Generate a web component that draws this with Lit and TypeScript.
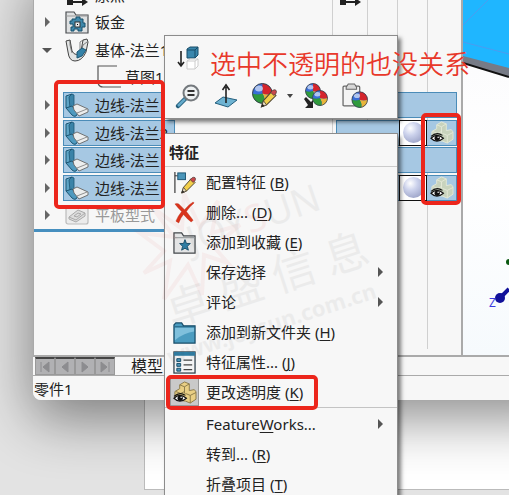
import { LitElement, html, svg, css, nothing, TemplateResult } from "lit";
import { customElement } from "lit/decorators.js";
import { classMap } from "lit/directives/class-map.js";

const icon = (size: number, body: unknown, view = "0 0 24 24") =>
  html`<svg class="icon" width=${size} height=${size} viewBox=${view} aria-hidden="true">${body}</svg>`;

const ball = (cx: number, cy: number, r: number) => svg`
  <g transform="translate(${cx} ${cy}) scale(${r / 10})">
    <circle r="10" fill="#2f56c8"/>
    <path d="M-10 0A10 10 0 0 1 0-10V0Q-5 2-10 0Z" fill="#3a6fd8"/>
    <path d="M0 0V-10A10 10 0 0 1 10 0Q5 2 0 0Z" fill="#d4242c"/>
    <path d="M0 0Q5 2 10 0A10 10 0 0 1 2 10Q3 5 0 0Z" fill="#e8b53a"/>
    <path d="M-10 0Q-5 2 0 0 3 5 2 10A10 10 0 0 1-10 0Z" fill="#2f9a3c"/>
    <ellipse cx="-3.5" cy="-5" rx="4" ry="3" fill="#fff" opacity=".6"/>
    <circle r="10" fill="none" stroke="#3a4148" stroke-width="1"/>
  </g>`;

const pencil = svg`
  <path d="M9 23l2-6 8-9 4 4-9 9z" fill="#f2cf4a" stroke="#4b4233"/>
  <path d="M18 9l2-2q2-1 3 0t0 3l-2 2z" fill="#c9474a" stroke="#55403c" stroke-width=".8"/>
  <path d="M9 23l2-6 3 4z" fill="#e9dcc0" stroke="#4b4233" stroke-width=".8"/>
  <path d="M9 23l1-3 2 2z" fill="#222"/>`;

const blocksEye = (fill: string, line: string) => svg`
  <path d="M7 4l5-3 5 2v7l5-1 2 2v8l-6 4-5-2-7-1-4-3v-6l5-3z" fill="${fill}" stroke="${line}"/>
  <path d="M7 4l5 2 5-3M12 6v7M3 11l5 2 4-2M13 13l5 2 6-3M18 15v8" fill="none" stroke="${line}"/>
  <path d="M1 18q6-6 13 0-7 6-13 0z" fill="#fff" stroke="#111" stroke-width="1.200"/>
  <path d="M1 16q6-5 12-1" fill="none" stroke="#111" stroke-width="1.200"/>
  <circle cx="7.500" cy="18" r="2.800" fill="#111"/><circle cx="8.500" cy="17" r=".8" fill="#fff"/>`;

const flange = svg`
  <path d="M1 3l6-2v13l-6 1z" fill="#5ea5c6" stroke="#1d5673"/>
  <path d="M4 4l3-3 2 1v11l-4 2z" fill="#3a83a8" stroke="#1d5673" stroke-width=".8"/>
  <path d="M1 15l6-2 6 7-2 3q-2 1-4-1z" fill="#4f9abf" stroke="#1d5673"/>
  <path d="M8 13l4-2 11 5v3l-9 4-5-6z" fill="#eceeee" stroke="#666" stroke-width=".9"/>
  <path d="M12 20l10-4" fill="none" stroke="#777" stroke-width=".8"/>`;

const baseFlange = svg`
  <path d="M1 3l4-1 2 11q4 7 9 0l2-11 4-1 1 3-2 10q-4 9-11 9-6 0-7-9z" fill="#e2e4e4" stroke="#444"/>
  <path d="M5 2v5l2 8M18 2l-3 2v8M22 4l-4 3-2 7" fill="none" stroke="#666" stroke-width=".8"/>
  <path d="M12 14l5-4 4 2-4 6-5 2z" fill="#3482a8" stroke="#1d5673"/>`;

const sheetFolder = svg`
  <path d="M1 4V2h8l2 3h12v18H1z" fill="#dfe1e2" stroke="#4a4d50" stroke-width="1.200"/>
  <path d="M1 6h22" stroke="#999"/>
  <path d="M7 9h4V7h4v2h3v4h2v4h-3v4h-4v-2H9v2H6v-4h2v-3H5v-3h2z" fill="#3f88ab" stroke="#17506d"/>
  <rect x="10" y="12" width="5" height="5" fill="#e8ecee" stroke="#333"/><path d="M12 14h1v1h-1z"/>`;

const flatPattern = svg`
  <rect x="1" y="3" width="22" height="18" rx="2" fill="#ececec" stroke="#bbb" stroke-width="1.200"/>
  <path d="M4 14l9-7 7 3v3l-9 6-7-3z" fill="#ddd" stroke="#aaa"/><path d="M4 14l7 3 9-7M9 13l4-3 3 1-4 3z" fill="none" stroke="#aaa"/>`;

const origin = svg`<path d="M5 0v19M5 19h15" fill="none" stroke="#222" stroke-width="2"/><path d="M17 15l6 4-6 4z" fill="#222"/><rect x="2" y="16" width="6" height="6" fill="#222"/><path d="M20 0v17" stroke="#222" stroke-width="2"/>`;

const menuIcons: Record<string, unknown> = {
  configure: svg`<path d="M2 1v22" stroke="#333" stroke-width="1.200"/><path d="M2 5h3" stroke="#333"/><rect x="5" y="2" width="8" height="7" fill="#4a95b9" stroke="#1d5673"/>${pencil}`,
  remove: svg`<path d="M2 3q2-1 4 0l6 6q4-5 9-8l1 1q-5 4-8 9 3 4 7 9l-2 2q-4-3-8-8-3 3-5 9l-3-2q2-5 6-10-4-4-7-8z" fill="#d8341c" stroke="#bb2812" stroke-width=".4"/>`,
  favorite: svg`<path d="M1 5V2h8l2 3h12v18H1z" fill="#e3e4e5" stroke="#44484c" stroke-width="1.300"/><path d="M1 7h22" stroke="#8b8f92"/><path d="M12.500 9l1.500 4h4l-3 3 1 4-3.500-2L9 20l1-4-3-3h4z" fill="#2e7ca3" stroke="#174c68"/>`,
  folder: svg`<path d="M1 4l2-2h6l2 3h12v18H1z" fill="#4b9cc0" stroke="#174c68" stroke-width="1.300"/><path d="M2 7h20v4q-10 1-20 9z" fill="#7fc0dc"/><path d="M2 6h20" stroke="#235f7e"/>`,
  props: svg`<rect x="1" y="1" width="22" height="22" fill="#f3f4f5" stroke="#2b3d48" stroke-width="1.300"/><path d="M1 1h22v4H1z" fill="#2f7ea4"/><path d="M4 8h4v3H4zM4 13h4v3H4zM4 18h4v3H4z" fill="#4a95b9" stroke="#174c68"/><path d="M11 9.500h9M11 14.500h9M11 19.500h9" stroke="#444" stroke-width="1.300"/>`,
  transparency: blocksEye("#e9cf84", "#8b7a49"),
};

interface TreeRow { label: string; glyph: unknown; arrow?: "right" | "down"; selected?: boolean; child?: boolean; muted?: boolean }
const edge: TreeRow = { label: "边线-法兰", glyph: flange, arrow: "right", selected: true };
const treeRows: TreeRow[] = [
  { label: "原点", glyph: origin },
  { label: "钣金", glyph: sheetFolder, arrow: "right" },
  { label: "基体-法兰1", glyph: baseFlange, arrow: "down" },
  { label: "草图1", glyph: svg`<path d="M22 1H3v17q1 4 5 4h18" fill="none" stroke="#555" stroke-width="1.200"/>`, child: true },
  edge, { ...edge, label: "边线-法兰2" }, edge, edge,
  { label: "平板型式", glyph: flatPattern, arrow: "right", muted: true },
];

interface MenuItem { label: string; key?: string; tail?: string; glyph?: string; sub?: boolean; checked?: boolean; rule?: boolean }
const menuItems: MenuItem[] = [
  { label: "配置特征 (", key: "B", tail: ")", glyph: "configure" },
  { label: "删除... (", key: "D", tail: ")", glyph: "remove" },
  { label: "添加到收藏 (", key: "E", tail: ")", glyph: "favorite" },
  { label: "保存选择", sub: true },
  { label: "评论", sub: true },
  { label: "添加到新文件夹 (", key: "H", tail: ")", glyph: "folder" },
  { label: "特征属性... (", key: "J", tail: ")", glyph: "props" },
  { label: "更改透明度 (", key: "K", tail: ")", glyph: "transparency", checked: true },
  { label: "Feature", key: "W", tail: "orks...", sub: true, rule: true },
  { label: "转到... (", key: "R", tail: ")" },
  { label: "折叠项目 (", key: "T", tail: ")" },
];

const shared = css`
  * { box-sizing: border-box; }
  button { font: inherit; color: inherit; background: none; border: 0; padding: 0; margin: 0; text-align: left; }
  .icon { display: block; flex: none; overflow: visible; }
`;

@customElement("feature-tree")
export class FeatureTree extends LitElement {
  static styles = [shared, css`
    :host { display: block; min-width: 0; overflow: hidden; border-left: 1px solid #aaa; }
    .list { list-style: none; margin: -19px 0 0; padding: 0; height: 248px; display: grid; grid-template-rows: repeat(9, 1fr); }
    .row { display: flex; align-items: center; min-height: 0; white-space: nowrap; }
    .arrow { flex: none; width: 29px; padding-left: 8px; }
    .entry { display: flex; align-items: center; gap: 6px; height: 26px; padding: 0 6px 0 1px; border: 1px solid transparent; }
    .selected .entry { background: #a6c8e3; border-color: #4b8cb8; width: 112px; }
    .child .entry { padding-left: 31px; }
    .muted { color: #999; }
    .bar { height: 3px; background: #468fbf; }
  `];
  private row(r: TreeRow) {
    return html`<li class=${classMap({ row: true, selected: !!r.selected, child: !!r.child, muted: !!r.muted })}>
      <span class="arrow">${r.arrow
        ? icon(10, r.arrow === "right" ? svg`<path d="M3 0v10l5-5z" fill="#666"/>` : svg`<path d="M0 3h10l-5 5z" fill="#555"/>`, "0 0 10 10")
        : nothing}</span>
      <button class="entry">${icon(24, r.glyph)}<span>${r.label}</span></button>
    </li>`;
  }
  render() {
    return html`<ul class="list">${treeRows.map((r) => this.row(r))}</ul><div class="bar"></div>`;
  }
}

@customElement("display-pane")
export class DisplayPane extends LitElement {
  static styles = [shared, css`
    :host { display: grid; grid-template-columns: 35px 30px 30px 1fr; position: relative; overflow: hidden; border-right: 2px solid #aaa; }
    .column { border-left: 1px solid #d0d0d0; margin-bottom: 6px; }
    .rows { position: absolute; inset: 0 4px auto 4px; margin-top: -19px; height: 248px; display: grid; grid-template-rows: repeat(9, 1fr); }
    .cell { display: flex; justify-content: flex-end; align-self: center; height: 26px; }
    .head { justify-content: flex-start; padding-left: 2px; align-items: center; }
    .selected { background: #a6c8e3; border: 1px solid #4b8cb8; }
    .swatch { width: 28px; margin: -1px 0; border: 1px solid #111; background: #fff; display: grid; place-items: center; }
    .ball { width: 21px; height: 21px; border-radius: 50%; background: radial-gradient(circle at 35% 30%, #fff, #ccd2ec 35%, #a2a9cc 75%, #858bab); }
    .state { width: 29px; display: grid; place-items: center; }
  `];
  render() {
    return html`
      <div class="column"></div><div class="column"></div><div class="column"></div><div class="column"></div>
      <div class="rows">
        <div class="cell head">${icon(24, origin)}</div>
        <div class="cell"></div><div class="cell"></div><div class="cell"></div>
        ${[false, true, false, true].map((full) => html`<div class="cell selected">${full
          ? html`<span class="swatch"><span class="ball"></span></span><span class="state">${icon(23, blocksEye("#c8d3bd", "#e3e8d6"))}</span>`
          : nothing}</div>`)}
      </div>`;
  }
}

@customElement("context-menu")
export class ContextMenu extends LitElement {
  static styles = [shared, css`
    :host { display: block; background: #f7f7f7; border: 1px solid #8c8c8c; box-shadow: 3px 4px 4px rgba(0,0,0,.5); overflow: hidden; }
    .title { height: 33px; margin: 0; padding: 7px 4px 0; font-size: 15px; line-height: 22px; border-bottom: 1px solid #ccc; }
    .item { display: flex; align-items: center; width: 100%; height: 30px; padding: 0 13px 0 5px; }
    .slot { display: grid; place-items: center; width: 29px; height: 28px; margin-right: 7px; flex: none; }
    .checked { background: #c9c9c9; border: 1px solid #999; }
    .text { flex: 1; white-space: pre; }
    .rule { height: 1px; margin: 0 0 1px; border: 0; background: #c4c4c4; }
    .key { text-decoration: underline; text-underline-offset: 2px; }
  `];
  render() {
    return html`<h2 class="title">特征</h2>
      ${menuItems.map((m): TemplateResult => html`
        ${m.rule ? html`<hr class="rule">` : nothing}
        <button class="item" role="menuitem">
          <span class=${classMap({ slot: true, checked: !!m.checked })}>${m.glyph ? icon(23, menuIcons[m.glyph]) : nothing}</span>
          <span class="text">${m.label}${m.key ? html`<span class="key">${m.key}</span>` : nothing}${m.tail ?? nothing}</span>
          ${m.sub ? icon(6, svg`<path d="M0 -2v10l5-5z" fill="#555"/>`, "0 0 6 6") : nothing}
        </button>`)}`;
  }
}

@customElement("quick-toolbar")
export class QuickToolbar extends LitElement {
  static styles = [shared, css`
    :host { display: block; background: #f7f7f7; border: 1px solid #8c8c8c; box-shadow: 3px 3px 4px rgba(0,0,0,.5); padding: 10px 11px; }
    .tools { display: flex; align-items: center; justify-content: flex-start; }
    .tools + .tools { margin-top: 13px; gap: 14px; }
    .drop { margin: 0 -3px 0 -4px; }
  `];
  render() {
    return html`
      <div class="tools"><button aria-label="选择顺序">${icon(24, svg`
        <path d="M5 5v15M2 16l3 4 3-4" fill="none" stroke="#222" stroke-width="1.600"/>
        <path d="M11 3l3-2h8v8l-3 3h-8z" fill="#3a87ad" stroke="#174c68"/><path d="M11 4h8v8M19 4l3-3" fill="none" stroke="#174c68"/>
        <path d="M11 15l3-2h8v7l-3 3h-8zM11 15h8v8M19 15l3-2" fill="#fff" stroke="#ccc"/>`)}</button></div>
      <div class="tools">
        <button aria-label="放大所选范围">${icon(24, svg`
          <path d="M2 22l8-8" stroke="#225d7b" stroke-width="4.500" stroke-linecap="round"/><path d="M2 22l7-7" stroke="#63a9ca" stroke-width="2.500"/>
          <circle cx="15" cy="9" r="7.500" fill="#eef1f2" stroke="#74797d" stroke-width="2"/><path d="M11.500 7h7M11.500 11h7" stroke="#333" stroke-width="2"/>`)}</button>
        <button aria-label="正视于">${icon(24, svg`
          <path d="M1 19l8-6 14 3-9 7z" fill="#6eb3d2" stroke="#245f7e"/>
          <path d="M12 19V3M8.500 6L12 1l3.500 5" fill="none" stroke="#222" stroke-width="1.600"/>`)}</button>
        <button aria-label="外观">${icon(25, svg`${ball(10, 10, 9.5)}${pencil}`)}</button>
        <button class="drop" aria-label="更多外观">${icon(6, svg`<path d="M0 1h6l-3 4z" fill="#444"/>`, "0 0 6 6")}</button>
        <button aria-label="复制外观">${icon(24, svg`${ball(9, 7, 7.5)}${ball(16, 14, 7.5)}<path d="M0 15l2-2 5 5 2-2v8H1l3-3z" fill="#222"/>`)}</button>
        <button aria-label="粘贴外观">${icon(25, svg`
          <rect x="1" y="3" width="16" height="19" rx="1" fill="#f4f4f4" stroke="#666" stroke-width="1.200"/><path d="M4 4l2-3h6l2 3v2H4z" fill="#d8d8d8" stroke="#666"/>${ball(17, 16, 7.5)}`)}</button>
      </div>`;
  }
}

@customElement("app-root")
export class AppRoot extends LitElement {
  static styles = [shared, css`
    :host { display: block; position: relative; height: 100vh; overflow: hidden; background: #e3e3e3; font: 15px/20px "Noto Sans", "Noto Sans CJK SC", sans-serif; color: #222; }
    .back { position: absolute; inset: 0 -2px 5px 144px; background: #fff; border: 1px solid #bbb; }
    .window { position: relative; display: flex; flex-direction: column; height: calc(100vh - 95px); margin-left: 33px; background: #f7f7f7; border-bottom-left-radius: 8px; overflow: hidden; }
    .shade { position: absolute; inset: -30px -60px 95px 33px; border-radius: 8px; box-shadow: 0 18px 56px rgba(0,0,0,.46); }
    .panes { flex: 1; min-height: 0; display: grid; grid-template-columns: 1fr 131px 46px; border-bottom: 2px solid #aaa; }
    .view { display: block; width: 100%; background: linear-gradient(#fafafc, #fff 50%, #f6fafd); }
    .tabs { display: flex; height: 19px; border-bottom: 1px solid #aaa; padding-left: 2px; }
    .nav { width: 20px; background: #b1b1b3; border: 1px solid #999; border-top: 2px solid #444; display: grid; place-items: center; }
    .tab { padding-left: 16px; line-height: 18px; font-size: 16px; }
    .status { height: 24px; padding: 3px 1px; line-height: 20px; }
    .toolbar { position: absolute; left: 164px; top: 35px; width: 234px; height: 84px; }
    .menu { position: absolute; left: 164px; top: 133px; bottom: -6px; width: 234px; }
    .mark { position: absolute; left: 130px; top: 160px; overflow: visible; pointer-events: none; }
    .note { position: absolute; left: 210px; top: 47px; margin: 0; font-size: 26px; line-height: 34px; font-weight: 350; color: #e8382a; white-space: nowrap; }
    .frame { position: absolute; border: 4px solid #ec261c; border-radius: 5px; pointer-events: none; }
    .edges { left: 54px; top: 80px; width: 111px; height: 129px; }
    .eyes { left: 421px; top: 113px; width: 40px; height: 92px; }
    .choice { left: 166px; top: 375px; width: 152px; height: 35px; }
  `];
  render() {
    const arrows = ["M2 1v10M10 1v10L4 6z", "M9 1v10L3 6z", "M3 1v10l6-5z", "M10 1v10M2 1v10l6-5z"];
    return html`
      <div class="back"></div>
      <div class="shade"></div>
      <main class="window">
        <div class="panes">
          <feature-tree></feature-tree>
          <display-pane></display-pane>
          <svg class="view" height="355" viewBox="0 0 46 355" preserveAspectRatio="xMinYMin slice">
            <path d="M0 54L46 67V77L0 63z" fill="#777b86"/><path d="M0 63L46 77" stroke="#111" stroke-width="2"/>
            <path d="M0 0H46V68L0 56z" fill="#1fb6ff"/><path d="M0 25L25 0M0 42L46 54" stroke="#4b9cf0" fill="none"/>
            <path d="M36 299L46 289" stroke="#11119a" stroke-width="4"/><circle cx="37" cy="298" r="5" fill="#11119a"/>
            <circle cx="46" cy="262" r="3" fill="#0b5a12"/>
            <text x="26" y="307" font-size="12" fill="#3a3ae0">Z</text>
          </svg>
        </div>
        <nav class="tabs">
          ${arrows.map((d, i) => html`<button class="nav" aria-label=${["首页", "上一页", "下一页", "末页"][i]}>${icon(12, svg`<path d=${d} fill="#8c8c8f" stroke="#8c8c8f"/>`, "0 0 12 12")}</button>`)}
          <button class="tab">模型</button>
        </nav>
        <footer class="status">零件1</footer>
      </main>
      <quick-toolbar class="toolbar"></quick-toolbar>
      <context-menu class="menu" role="menu"></context-menu>
      <svg class="mark" width="270" height="230" viewBox="0 0 270 230" aria-hidden="true">
        <path d="M10 73l34 4-22-30 30 22 2-36 16 34 18-26-6 32 28-8-26 22 14 16-24-8-2 40-14-30-24 34 6-38-26 12 20-22z" fill="none" stroke="#e02020" stroke-width="4" opacity=".05"/>
        <g fill="#444" opacity=".06">
          <text transform="translate(62 94) rotate(-19)" font-size="38">JOY<tspan fill="#d22">S</tspan>UN</text>
          <text transform="translate(42 167) rotate(-18)" font-size="44">卓 盛 信 息</text>
          <text transform="translate(40 205) rotate(-18)" font-size="22" font-weight="bold">www.joysun.com.cn</text>
        </g>
      </svg>
      <p class="note">选中不透明的也没关系</p>
      <div class="frame edges"></div><div class="frame eyes"></div><div class="frame choice"></div>`;
  }
}
